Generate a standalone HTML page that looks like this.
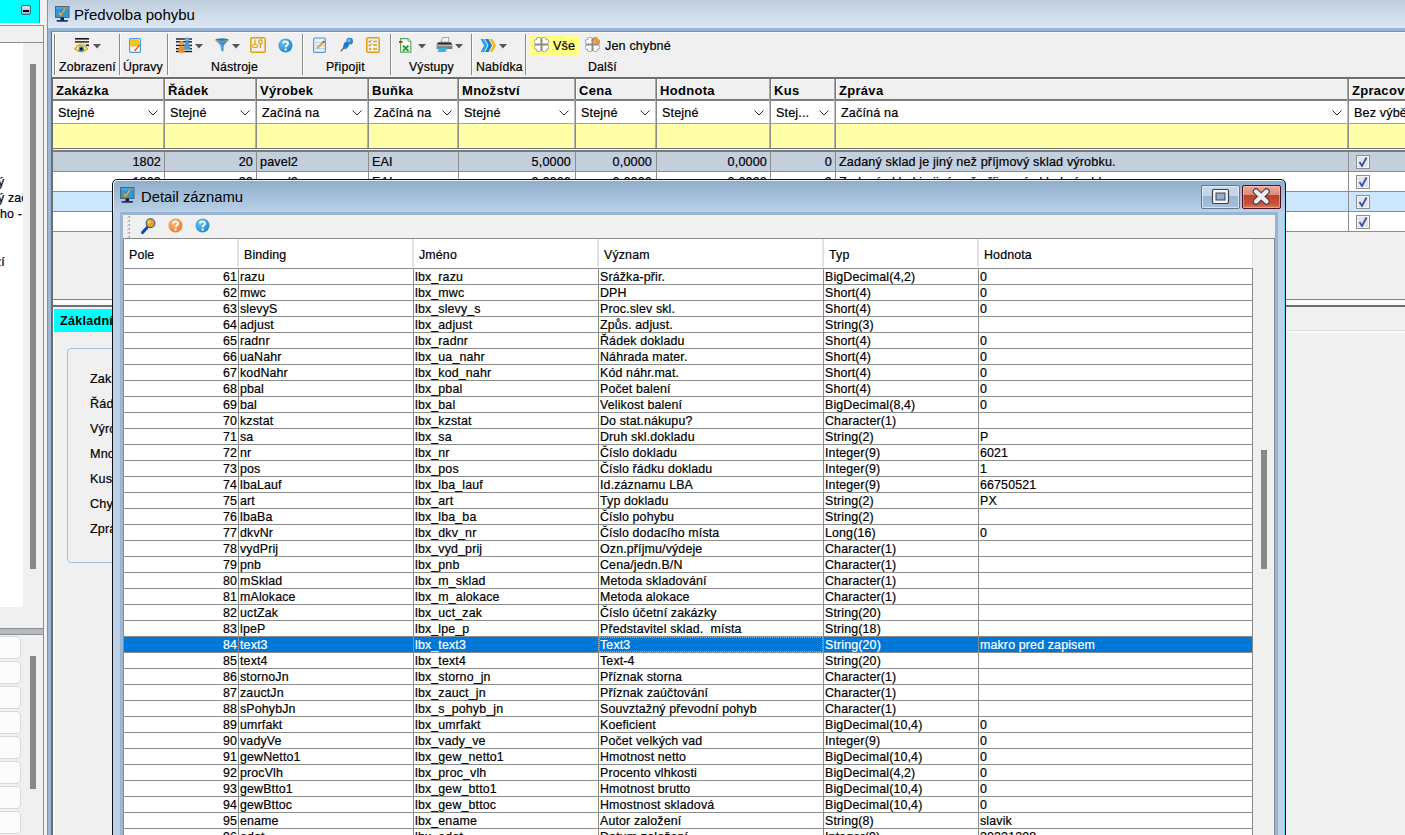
<!DOCTYPE html><html><head><meta charset="utf-8"><style>
html,body{margin:0;padding:0;}
body{width:1405px;height:835px;overflow:hidden;position:relative;background:#f0f0f0;font-family:"Liberation Sans", sans-serif;color:#000;}
div{position:absolute;box-sizing:border-box;}
.t{white-space:nowrap;font-size:12.4px;line-height:15px;-webkit-text-stroke:0.2px currentColor;letter-spacing:0.15px;}
.hb{white-space:nowrap;font-size:13px;font-weight:bold;line-height:15px;letter-spacing:0.3px;}
svg{position:absolute;}

</style></head><body>
<div style="left:0px;top:0px;width:39px;height:23px;background:#00ffff"></div>
<div style="left:39px;top:0px;width:1px;height:23px;background:#7a7a7a"></div>
<div style="left:21px;top:5px;width:10px;height:10px;background:linear-gradient(#dfe9f5,#8fb3e3);border:1px solid #2b6b74;border-radius:2px"></div>
<div style="left:23px;top:10px;width:6px;height:2px;background:#000"></div>
<div style="left:0px;top:23px;width:44px;height:2px;background:#fafafa"></div>
<div style="left:0px;top:25px;width:44px;height:1px;background:#8a9099"></div>
<div style="left:43px;top:25px;width:1px;height:810px;background:#8a9099"></div>
<div style="left:0px;top:42px;width:43px;height:1px;background:#8a9099"></div>
<div style="left:0px;top:43px;width:23px;height:564px;background:#ffffff"></div>
<div style="left:30px;top:64px;width:6px;height:505px;background:#888888"></div>
<div style="left:0;top:170px;width:23px;height:110px;overflow:hidden">
<div class="t" style="left:-2px;top:5px;">ý</div>
<div class="t" style="left:-2px;top:21px;">ý zač</div>
<div class="t" style="left:0px;top:37px;">ho -</div>
<div class="t" style="left:-5px;top:85px;">zí</div>
</div>
<div style="left:0px;top:628px;width:43px;height:1px;background:#8a9099"></div>
<div style="left:0px;top:629px;width:43px;height:5px;background:#b9b9b9"></div>
<div style="left:0px;top:634px;width:43px;height:1px;background:#8a9099"></div>
<div style="left:-6px;top:636px;width:27px;height:23px;background:#fcfcfc;border:1px solid #d9d9d9;border-radius:4px"></div>
<div style="left:-6px;top:661px;width:27px;height:23px;background:#fcfcfc;border:1px solid #d9d9d9;border-radius:4px"></div>
<div style="left:-6px;top:686px;width:27px;height:23px;background:#fcfcfc;border:1px solid #d9d9d9;border-radius:4px"></div>
<div style="left:-6px;top:711px;width:27px;height:23px;background:#fcfcfc;border:1px solid #d9d9d9;border-radius:4px"></div>
<div style="left:-6px;top:736px;width:27px;height:23px;background:#fcfcfc;border:1px solid #d9d9d9;border-radius:4px"></div>
<div style="left:-6px;top:761px;width:27px;height:23px;background:#fcfcfc;border:1px solid #d9d9d9;border-radius:4px"></div>
<div style="left:-6px;top:786px;width:27px;height:23px;background:#fcfcfc;border:1px solid #d9d9d9;border-radius:4px"></div>
<div style="left:-6px;top:811px;width:27px;height:23px;background:#fcfcfc;border:1px solid #d9d9d9;border-radius:4px"></div>
<div style="left:30px;top:656px;width:6px;height:133px;background:#888888"></div>
<div style="left:47px;top:0px;width:1px;height:835px;background:#8a9099"></div>
<div style="left:48px;top:0px;width:1357px;height:28px;background:linear-gradient(#bfcedc,#dce8f4)"></div>
<div style="left:48px;top:28px;width:1357px;height:3px;background:#9ab5d2"></div>
<div style="left:48px;top:28px;width:3px;height:807px;background:#9cb6d4"></div>
<div style="left:51px;top:77px;width:1px;height:758px;background:#6c6c6c"></div>
<div style="left:52px;top:306px;width:1px;height:529px;background:#6c6c6c"></div>
<div style="left:53px;top:307px;width:2px;height:528px;background:#f8f8f8"></div>
<svg style="left:55px;top:6px" width="15" height="16" viewBox="0 0 15 16">
<rect x="0.5" y="0.5" width="13.5" height="11" fill="#2b9ad8" stroke="#5a6270"/>
<rect x="1" y="1" width="12.5" height="2" fill="#4ab0e8" opacity="0.6"/>
<path d="M3.8 6.5 L5.6 9.2 L10 2.8" stroke="#7a4a10" stroke-width="2.4" fill="none" opacity="0.35"/>
<path d="M3.8 6.5 L5.6 9.2 L10 2.8" stroke="#f8a020" stroke-width="1.6" fill="none"/>
<rect x="5.5" y="11.5" width="3.5" height="2.5" fill="#1a1a22"/>
<rect x="1.5" y="14" width="11.5" height="1.8" rx="0.8" fill="#2a3060"/>
</svg>
<div style="left:74px;top:6px;font-size:15px;line-height:18px;white-space:nowrap;color:#000">Předvolba pohybu</div>
<div style="left:51px;top:31px;width:1354px;height:46px;background:#f0f0f0;border-left:1px solid #6c6c6c;border-top:1px solid #8a9099"></div>
<div style="left:52px;top:32px;width:1353px;height:1px;background:#fafafa"></div>
<div style="left:54px;top:34px;width:1px;height:41px;background:#8a8a8a"></div>
<div style="left:55px;top:34px;width:1px;height:41px;background:#fbfbfb"></div>
<div style="left:119px;top:34px;width:1px;height:41px;background:#8a8a8a"></div>
<div style="left:120px;top:34px;width:1px;height:41px;background:#fbfbfb"></div>
<div style="left:167px;top:34px;width:1px;height:41px;background:#8a8a8a"></div>
<div style="left:168px;top:34px;width:1px;height:41px;background:#fbfbfb"></div>
<div style="left:302px;top:34px;width:1px;height:41px;background:#8a8a8a"></div>
<div style="left:303px;top:34px;width:1px;height:41px;background:#fbfbfb"></div>
<div style="left:390px;top:34px;width:1px;height:41px;background:#8a8a8a"></div>
<div style="left:391px;top:34px;width:1px;height:41px;background:#fbfbfb"></div>
<div style="left:471px;top:34px;width:1px;height:41px;background:#8a8a8a"></div>
<div style="left:472px;top:34px;width:1px;height:41px;background:#fbfbfb"></div>
<div style="left:525px;top:34px;width:1px;height:41px;background:#8a8a8a"></div>
<div style="left:526px;top:34px;width:1px;height:41px;background:#fbfbfb"></div>
<div class="t" style="left:59px;top:59px;font-size:12.3px;line-height:16px">Zobrazení</div>
<div class="t" style="left:123px;top:59px;font-size:12.3px;line-height:16px">Úpravy</div>
<div class="t" style="left:211px;top:59px;font-size:12.3px;line-height:16px">Nástroje</div>
<div class="t" style="left:326px;top:59px;font-size:12.3px;line-height:16px">Připojit</div>
<div class="t" style="left:409px;top:59px;font-size:12.3px;line-height:16px">Výstupy</div>
<div class="t" style="left:476px;top:59px;font-size:12.3px;line-height:16px">Nabídka</div>
<div class="t" style="left:588px;top:59px;font-size:12.3px;line-height:16px">Další</div>
<div style="left:529px;top:35px;width:51px;height:21px;background:#ffff80"></div>
<div class="t" style="left:553px;top:38px;font-size:12.6px;line-height:16px">Vše</div>
<div class="t" style="left:605px;top:38px;font-size:12.6px;line-height:16px">Jen chybné</div>
<svg style="left:74px;top:37px" width="16" height="17" viewBox="0 0 16 17">
<rect x="1" y="1" width="14" height="1.6" fill="#1a1a1a"/><rect x="1" y="4.2" width="14" height="1.4" fill="#1a1a1a"/>
<path d="M0.8 11.8 Q7 4.5 13.6 11.8 Q7 17.5 0.8 11.8 Z" fill="#fbf3c8" stroke="#d8a800" stroke-width="1.3"/>
<path d="M2 9 Q7 5 12 8.5" stroke="#e8c030" stroke-width="1" fill="none"/>
<circle cx="7.3" cy="12" r="2.7" fill="#2b86c2"/><circle cx="7.3" cy="12" r="1.3" fill="#0a0a0a"/>
<rect x="12" y="7.5" width="3" height="1.6" fill="#1a1a1a"/>
</svg>
<svg style="left:93px;top:44px" width="8" height="5"><path d="M0 0 H8 L4 4.5 Z" fill="#555"/></svg>
<svg style="left:129px;top:38px" width="12" height="15" viewBox="0 0 12 15">
<rect x="0.6" y="0.6" width="10.8" height="13.8" rx="1" fill="#fff" stroke="#4a9ee0" stroke-width="1.2"/>
<path d="M1.2 1.2 H8.5 L10.8 3.5 V8.5 H1.2 Z" fill="#f8c21c"/>
<path d="M5.5 13 L10.8 7" stroke="#e8602a" stroke-width="1.6"/>
</svg>
<svg style="left:176px;top:37px" width="16" height="16" viewBox="0 0 16 16">
<g fill="#1a1a1a"><rect x="0" y="1.3" width="16" height="1.4"/><rect x="0" y="4.1" width="16" height="1.4"/><rect x="0" y="7.7" width="16" height="1.4"/><rect x="0" y="11" width="16" height="1.4"/><rect x="0" y="13.8" width="16" height="1.4"/></g>
<circle cx="11" cy="2.6" r="2.3" fill="#5aaee6"/><path d="M8 12 Q8 5 11 5 Q14 5 14.5 12 Z" fill="#4a9ad8"/>
<circle cx="5.5" cy="6.3" r="2.3" fill="#f49a3a"/><path d="M2.2 15.5 Q2.2 8.5 5.5 8.5 Q8.8 8.5 8.8 15.5 Z" fill="#f08a2a"/>
</svg>
<svg style="left:195px;top:44px" width="8" height="5"><path d="M0 0 H8 L4 4.5 Z" fill="#555"/></svg>
<svg style="left:215px;top:38px" width="14" height="14" viewBox="0 0 14 14">
<path d="M0.2 2 Q0.5 0.2 7 0.2 Q13.5 0.2 13.8 2 L8.6 7.5 L8.4 13.6 L6.2 12.8 L5.4 7.5 Z" fill="#3b8fd0"/>
<ellipse cx="7" cy="2" rx="6.2" ry="1.3" fill="#2a78c0"/>
<path d="M0.8 2.6 Q7 4.2 13.2 2.6" stroke="#d8a040" stroke-width="0.9" fill="none"/>
<path d="M2.5 3.5 L6.5 7.5 V12" stroke="#6cc0f0" stroke-width="1" fill="none"/>
</svg>
<svg style="left:232px;top:44px" width="8" height="5"><path d="M0 0 H8 L4 4.5 Z" fill="#555"/></svg>
<svg style="left:250px;top:37px" width="16" height="16" viewBox="0 0 16 16">
<rect x="0.8" y="0.8" width="14.4" height="14.4" rx="1.5" fill="none" stroke="#e0a010" stroke-width="1.5"/>
<path d="M5 2.5 V11 M10.5 2.5 V11" stroke="#e0a010" stroke-width="1.2"/>
<ellipse cx="5" cy="9" rx="2.6" ry="1.5" fill="#fff" stroke="#e0a010" stroke-width="1.1"/>
<ellipse cx="10.5" cy="5" rx="1.7" ry="2.1" fill="#fff" stroke="#e0a010" stroke-width="1.1"/>
</svg>
<svg style="left:278px;top:38px" width="15" height="15" viewBox="0 0 15 15">
<defs><radialGradient id="g27838" cx="0.35" cy="0.3" r="0.85"><stop offset="0" stop-color="#5cc0f0"/><stop offset="1" stop-color="#1580c8"/></radialGradient></defs>
<circle cx="7.5" cy="7.5" r="7" fill="url(#g27838)"/>
<path d="M5.1 5.4 C5.1 2.9 10 2.9 10 5.4 C10 7.2 7.6 7.2 7.6 9.3" stroke="#fff" stroke-width="1.9" fill="none"/>
<rect x="6.6" y="10.6" width="2" height="2" fill="#fff"/>
</svg>
<svg style="left:313px;top:37px" width="13" height="16" viewBox="0 0 13 16">
<rect x="0.6" y="1" width="11.8" height="14.4" rx="1.2" fill="#e4f2fc" stroke="#5a9ad8" stroke-width="1.2"/>
<path d="M2 5.5 H11 M2 8.5 H11 M2 11.5 H11" stroke="#a8cdea" stroke-width="0.8"/>
<path d="M2 1 H11" stroke="#c8a040" stroke-width="1.2" stroke-dasharray="1 1"/>
<path d="M4 11.5 L10.5 5" stroke="#f0a020" stroke-width="2"/>
<path d="M10 5.5 L11.2 4.3" stroke="#c03a2a" stroke-width="2"/>
</svg>
<svg style="left:340px;top:37px" width="14" height="15" viewBox="0 0 14 15">
<path d="M0.8 14.2 L5 9.5" stroke="#666" stroke-width="1.3"/>
<path d="M3.5 8.2 L6.5 11.2 L8.5 9.5 L9.5 4.5 L4.5 5.5 Z" fill="#1f6fb8"/>
<circle cx="9.6" cy="4.2" r="3.4" fill="#2d86cc"/>
<circle cx="9" cy="3.5" r="1.5" fill="#7cc4f0"/>
<circle cx="5.2" cy="9.8" r="2.2" fill="#2a7cc4"/>
</svg>
<svg style="left:366px;top:37px" width="14" height="16" viewBox="0 0 14 16">
<rect x="0.8" y="0.8" width="12.4" height="14.4" rx="1.2" fill="none" stroke="#e0a010" stroke-width="1.5"/>
<path d="M2.5 4 L3.7 5.2 L5.5 2.8 M2.5 7.8 L3.7 9 L5.5 6.6" stroke="#e0a010" stroke-width="1.1" fill="none"/>
<circle cx="4" cy="12" r="1.2" fill="#e0a010"/>
<path d="M7 4.3 H11 M7 8 H11 M7 12 H11" stroke="#e0a010" stroke-width="1.3"/>
</svg>
<svg style="left:399px;top:38px" width="13" height="15" viewBox="0 0 13 15">
<path d="M1.6 0.6 H9 L11.8 3.4 V14.2 H1.6 Z" fill="#fff" stroke="#5aa85a" stroke-width="1.2"/>
<path d="M9 0.6 V3.4 H11.8" fill="#e8f4e8" stroke="#5aa85a" stroke-width="0.8"/>
<rect x="0" y="3" width="3.5" height="1.8" fill="#d02020"/>
<path d="M4 7.5 L9.5 13 M9.5 7.5 L4 13" stroke="#2a9a3a" stroke-width="1.8"/>
</svg>
<svg style="left:418px;top:44px" width="8" height="5"><path d="M0 0 H8 L4 4.5 Z" fill="#555"/></svg>
<svg style="left:436px;top:37px" width="17" height="16" viewBox="0 0 17 16">
<path d="M5 5 L6.5 0.6 H13 L12.5 5 Z" fill="#fafafa" stroke="#8a8a8a" stroke-width="0.8"/>
<path d="M0.6 7 Q1 5 3 5 H14 Q16.4 5 16.4 7.5 V12 H0.6 Z" fill="#7a7c80"/>
<rect x="2" y="5.8" width="13" height="1.4" fill="#2a2a2a"/>
<rect x="1" y="8" width="15" height="1.2" fill="#b8babd"/>
<path d="M3 10.5 L1.5 15 H9.5 L11 10.5 Z" fill="#38b0e8"/>
</svg>
<svg style="left:455px;top:44px" width="8" height="5"><path d="M0 0 H8 L4 4.5 Z" fill="#555"/></svg>
<svg style="left:480px;top:39px" width="17" height="13" viewBox="0 0 17 13">
<path d="M0.5 0 H4 L7.5 6.5 L4 13 H0.5 L4 6.5 Z" fill="#28a8e8"/>
<path d="M5 0 H8.5 L12 6.5 L8.5 13 H5 L8.5 6.5 Z" fill="#1e7cc8"/>
<path d="M9.5 0 H12.5 L16 6.5 L12.5 13 H9.5 L13 6.5 Z" fill="#f8b818"/>
</svg>
<svg style="left:499px;top:44px" width="8" height="5"><path d="M0 0 H8 L4 4.5 Z" fill="#555"/></svg>
<svg style="left:534px;top:37px" width="15" height="15" viewBox="0 0 15 15"><g fill="#9a9a9a"><circle cx="2.3" cy="4.7" r="2.5"/><circle cx="4.7" cy="2.3" r="2.5"/><path d="M7.0 7.0 L1.0 6.0 L6.0 1.0 Z" stroke="#909090" stroke-width="0"/><circle cx="12.7" cy="4.7" r="2.5"/><circle cx="10.3" cy="2.3" r="2.5"/><path d="M8.0 7.0 L14.0 6.0 L9.0 1.0 Z" stroke="#909090" stroke-width="0"/><circle cx="2.3" cy="10.3" r="2.5"/><circle cx="4.7" cy="12.7" r="2.5"/><path d="M7.0 8.0 L1.0 9.0 L6.0 14.0 Z" stroke="#909090" stroke-width="0"/><circle cx="12.7" cy="10.3" r="2.5"/><circle cx="10.3" cy="12.7" r="2.5"/><path d="M8.0 8.0 L14.0 9.0 L9.0 14.0 Z" stroke="#909090" stroke-width="0"/></g><g fill="#fff"><circle cx="2.3" cy="4.7" r="1.7"/><circle cx="4.7" cy="2.3" r="1.7"/><path d="M6.2 6.2 L1.7000000000000002 6.2 L1.7000000000000002 4.5 L4.5 1.7000000000000002 L6.2 1.7000000000000002 Z"/></g><g fill="#fff"><circle cx="12.7" cy="4.7" r="1.7"/><circle cx="10.3" cy="2.3" r="1.7"/><path d="M8.8 6.2 L13.3 6.2 L13.3 4.5 L10.5 1.7000000000000002 L8.8 1.7000000000000002 Z"/></g><g fill="#fff"><circle cx="2.3" cy="10.3" r="1.7"/><circle cx="4.7" cy="12.7" r="1.7"/><path d="M6.2 8.8 L1.7000000000000002 8.8 L1.7000000000000002 10.5 L4.5 13.3 L6.2 13.3 Z"/></g><g fill="#fff"><circle cx="12.7" cy="10.3" r="1.7"/><circle cx="10.3" cy="12.7" r="1.7"/><path d="M8.8 8.8 L13.3 8.8 L13.3 10.5 L10.5 13.3 L8.8 13.3 Z"/></g><path d="M7.5 1 V14 M1 7.5 H14" stroke="#808080" stroke-width="0.9"/></svg>
<svg style="left:585px;top:37px" width="15" height="15" viewBox="0 0 15 15"><g fill="#9a9a9a"><circle cx="2.3" cy="4.7" r="2.5"/><circle cx="4.7" cy="2.3" r="2.5"/><path d="M7.0 7.0 L1.0 6.0 L6.0 1.0 Z" stroke="#909090" stroke-width="0"/><circle cx="12.7" cy="4.7" r="2.5"/><circle cx="10.3" cy="2.3" r="2.5"/><path d="M8.0 7.0 L14.0 6.0 L9.0 1.0 Z" stroke="#909090" stroke-width="0"/><circle cx="2.3" cy="10.3" r="2.5"/><circle cx="4.7" cy="12.7" r="2.5"/><path d="M7.0 8.0 L1.0 9.0 L6.0 14.0 Z" stroke="#909090" stroke-width="0"/><circle cx="12.7" cy="10.3" r="2.5"/><circle cx="10.3" cy="12.7" r="2.5"/><path d="M8.0 8.0 L14.0 9.0 L9.0 14.0 Z" stroke="#909090" stroke-width="0"/></g><g fill="#fff"><circle cx="2.3" cy="4.7" r="1.7"/><circle cx="4.7" cy="2.3" r="1.7"/><path d="M6.2 6.2 L1.7000000000000002 6.2 L1.7000000000000002 4.5 L4.5 1.7000000000000002 L6.2 1.7000000000000002 Z"/></g><g fill="#f8982a"><circle cx="12.7" cy="4.7" r="1.7"/><circle cx="10.3" cy="2.3" r="1.7"/><path d="M8.8 6.2 L13.3 6.2 L13.3 4.5 L10.5 1.7000000000000002 L8.8 1.7000000000000002 Z"/></g><g fill="#fff"><circle cx="2.3" cy="10.3" r="1.7"/><circle cx="4.7" cy="12.7" r="1.7"/><path d="M6.2 8.8 L1.7000000000000002 8.8 L1.7000000000000002 10.5 L4.5 13.3 L6.2 13.3 Z"/></g><g fill="#fff"><circle cx="12.7" cy="10.3" r="1.7"/><circle cx="10.3" cy="12.7" r="1.7"/><path d="M8.8 8.8 L13.3 8.8 L13.3 10.5 L10.5 13.3 L8.8 13.3 Z"/></g><path d="M7.5 1 V14 M1 7.5 H14" stroke="#808080" stroke-width="0.9"/></svg>
<div style="left:51px;top:77px;width:1354px;height:2px;background:#6e6e6e"></div>
<div style="left:51px;top:79px;width:2px;height:228px;background:#6e6e6e"></div>
<div style="left:53px;top:79px;width:1352px;height:21px;background:#f0f0f0;border-top:1px solid #fcfcfc"></div>
<div style="left:53px;top:99px;width:1352px;height:2px;background:#7d7d7d"></div>
<div style="left:53px;top:101px;width:1352px;height:23px;background:#ffffff"></div>
<div style="left:53px;top:123px;width:1352px;height:1px;background:#a0a0a0"></div>
<div style="left:53px;top:124px;width:1352px;height:24px;background:#ffffaa"></div>
<div style="left:53px;top:148px;width:1352px;height:1px;background:#6e6e6e"></div>
<div style="left:53px;top:149px;width:1352px;height:1px;background:#fafafa"></div>
<div style="left:53px;top:150px;width:1352px;height:2px;background:#7a7a7a"></div>
<div style="left:53px;top:152px;width:1352px;height:19px;background:#c3cfdc"></div>
<div style="left:53px;top:171px;width:1352px;height:20px;background:#ffffff"></div>
<div style="left:53px;top:191px;width:1352px;height:20px;background:#cce6fd"></div>
<div style="left:53px;top:211px;width:1352px;height:20px;background:#ffffff"></div>
<div style="left:53px;top:231px;width:1352px;height:68px;background:#f0f0f0"></div>
<div style="left:53px;top:171px;width:1352px;height:1px;background:#8c8c8c"></div>
<div style="left:53px;top:191px;width:1352px;height:1px;background:#8c8c8c"></div>
<div style="left:53px;top:211px;width:1352px;height:1px;background:#8c8c8c"></div>
<div style="left:53px;top:231px;width:1352px;height:1px;background:#8c8c8c"></div>
<div style="left:53px;top:299px;width:1352px;height:1px;background:#7a8090"></div>
<div style="left:53px;top:300px;width:1352px;height:5px;background:#fafafa"></div>
<div style="left:51px;top:305px;width:1354px;height:2px;background:#6a6e78"></div>
<div style="left:163px;top:79px;width:1px;height:22px;background:#a8a8a8"></div>
<div style="left:164px;top:79px;width:1px;height:22px;background:#7a7a7a"></div>
<div style="left:165px;top:80px;width:1px;height:19px;background:#fcfcfc"></div>
<div style="left:163px;top:101px;width:1px;height:23px;background:#c0c0c0"></div>
<div style="left:164px;top:101px;width:1px;height:23px;background:#8a8a8a"></div>
<div style="left:163px;top:124px;width:1px;height:24px;background:#b0b0b0"></div>
<div style="left:164px;top:124px;width:1px;height:24px;background:#8c8c8c"></div>
<div style="left:164px;top:152px;width:1px;height:79px;background:#8c8c8c"></div>
<div style="left:255px;top:79px;width:1px;height:22px;background:#a8a8a8"></div>
<div style="left:256px;top:79px;width:1px;height:22px;background:#7a7a7a"></div>
<div style="left:257px;top:80px;width:1px;height:19px;background:#fcfcfc"></div>
<div style="left:255px;top:101px;width:1px;height:23px;background:#c0c0c0"></div>
<div style="left:256px;top:101px;width:1px;height:23px;background:#8a8a8a"></div>
<div style="left:255px;top:124px;width:1px;height:24px;background:#b0b0b0"></div>
<div style="left:256px;top:124px;width:1px;height:24px;background:#8c8c8c"></div>
<div style="left:256px;top:152px;width:1px;height:79px;background:#8c8c8c"></div>
<div style="left:367px;top:79px;width:1px;height:22px;background:#a8a8a8"></div>
<div style="left:368px;top:79px;width:1px;height:22px;background:#7a7a7a"></div>
<div style="left:369px;top:80px;width:1px;height:19px;background:#fcfcfc"></div>
<div style="left:367px;top:101px;width:1px;height:23px;background:#c0c0c0"></div>
<div style="left:368px;top:101px;width:1px;height:23px;background:#8a8a8a"></div>
<div style="left:367px;top:124px;width:1px;height:24px;background:#b0b0b0"></div>
<div style="left:368px;top:124px;width:1px;height:24px;background:#8c8c8c"></div>
<div style="left:368px;top:152px;width:1px;height:79px;background:#8c8c8c"></div>
<div style="left:457px;top:79px;width:1px;height:22px;background:#a8a8a8"></div>
<div style="left:458px;top:79px;width:1px;height:22px;background:#7a7a7a"></div>
<div style="left:459px;top:80px;width:1px;height:19px;background:#fcfcfc"></div>
<div style="left:457px;top:101px;width:1px;height:23px;background:#c0c0c0"></div>
<div style="left:458px;top:101px;width:1px;height:23px;background:#8a8a8a"></div>
<div style="left:457px;top:124px;width:1px;height:24px;background:#b0b0b0"></div>
<div style="left:458px;top:124px;width:1px;height:24px;background:#8c8c8c"></div>
<div style="left:458px;top:152px;width:1px;height:79px;background:#8c8c8c"></div>
<div style="left:574px;top:79px;width:1px;height:22px;background:#a8a8a8"></div>
<div style="left:575px;top:79px;width:1px;height:22px;background:#7a7a7a"></div>
<div style="left:576px;top:80px;width:1px;height:19px;background:#fcfcfc"></div>
<div style="left:574px;top:101px;width:1px;height:23px;background:#c0c0c0"></div>
<div style="left:575px;top:101px;width:1px;height:23px;background:#8a8a8a"></div>
<div style="left:574px;top:124px;width:1px;height:24px;background:#b0b0b0"></div>
<div style="left:575px;top:124px;width:1px;height:24px;background:#8c8c8c"></div>
<div style="left:575px;top:152px;width:1px;height:79px;background:#8c8c8c"></div>
<div style="left:655px;top:79px;width:1px;height:22px;background:#a8a8a8"></div>
<div style="left:656px;top:79px;width:1px;height:22px;background:#7a7a7a"></div>
<div style="left:657px;top:80px;width:1px;height:19px;background:#fcfcfc"></div>
<div style="left:655px;top:101px;width:1px;height:23px;background:#c0c0c0"></div>
<div style="left:656px;top:101px;width:1px;height:23px;background:#8a8a8a"></div>
<div style="left:655px;top:124px;width:1px;height:24px;background:#b0b0b0"></div>
<div style="left:656px;top:124px;width:1px;height:24px;background:#8c8c8c"></div>
<div style="left:656px;top:152px;width:1px;height:79px;background:#8c8c8c"></div>
<div style="left:769px;top:79px;width:1px;height:22px;background:#a8a8a8"></div>
<div style="left:770px;top:79px;width:1px;height:22px;background:#7a7a7a"></div>
<div style="left:771px;top:80px;width:1px;height:19px;background:#fcfcfc"></div>
<div style="left:769px;top:101px;width:1px;height:23px;background:#c0c0c0"></div>
<div style="left:770px;top:101px;width:1px;height:23px;background:#8a8a8a"></div>
<div style="left:769px;top:124px;width:1px;height:24px;background:#b0b0b0"></div>
<div style="left:770px;top:124px;width:1px;height:24px;background:#8c8c8c"></div>
<div style="left:770px;top:152px;width:1px;height:79px;background:#8c8c8c"></div>
<div style="left:834px;top:79px;width:1px;height:22px;background:#a8a8a8"></div>
<div style="left:835px;top:79px;width:1px;height:22px;background:#7a7a7a"></div>
<div style="left:836px;top:80px;width:1px;height:19px;background:#fcfcfc"></div>
<div style="left:834px;top:101px;width:1px;height:23px;background:#c0c0c0"></div>
<div style="left:835px;top:101px;width:1px;height:23px;background:#8a8a8a"></div>
<div style="left:834px;top:124px;width:1px;height:24px;background:#b0b0b0"></div>
<div style="left:835px;top:124px;width:1px;height:24px;background:#8c8c8c"></div>
<div style="left:835px;top:152px;width:1px;height:79px;background:#8c8c8c"></div>
<div style="left:1347px;top:79px;width:1px;height:22px;background:#a8a8a8"></div>
<div style="left:1348px;top:79px;width:1px;height:22px;background:#7a7a7a"></div>
<div style="left:1349px;top:80px;width:1px;height:19px;background:#fcfcfc"></div>
<div style="left:1347px;top:101px;width:1px;height:23px;background:#c0c0c0"></div>
<div style="left:1348px;top:101px;width:1px;height:23px;background:#8a8a8a"></div>
<div style="left:1347px;top:124px;width:1px;height:24px;background:#b0b0b0"></div>
<div style="left:1348px;top:124px;width:1px;height:24px;background:#8c8c8c"></div>
<div style="left:1348px;top:152px;width:1px;height:79px;background:#8c8c8c"></div>
<div class="hb" style="left:56px;top:83px">Zakázka</div>
<div class="t" style="left:58px;top:105px;font-size:12.6px;line-height:16px">Stejné</div>
<svg style="left:148px;top:110px" width="10" height="6"><path d="M0.5 0.5 L5 5 L9.5 0.5" stroke="#333" stroke-width="1" fill="none"/></svg>
<div class="hb" style="left:168px;top:83px">Řádek</div>
<div class="t" style="left:170px;top:105px;font-size:12.6px;line-height:16px">Stejné</div>
<svg style="left:240px;top:110px" width="10" height="6"><path d="M0.5 0.5 L5 5 L9.5 0.5" stroke="#333" stroke-width="1" fill="none"/></svg>
<div class="hb" style="left:260px;top:83px">Výrobek</div>
<div class="t" style="left:262px;top:105px;font-size:12.6px;line-height:16px">Začíná na</div>
<svg style="left:352px;top:110px" width="10" height="6"><path d="M0.5 0.5 L5 5 L9.5 0.5" stroke="#333" stroke-width="1" fill="none"/></svg>
<div class="hb" style="left:372px;top:83px">Buňka</div>
<div class="t" style="left:374px;top:105px;font-size:12.6px;line-height:16px">Začíná na</div>
<svg style="left:442px;top:110px" width="10" height="6"><path d="M0.5 0.5 L5 5 L9.5 0.5" stroke="#333" stroke-width="1" fill="none"/></svg>
<div class="hb" style="left:462px;top:83px">Množství</div>
<div class="t" style="left:464px;top:105px;font-size:12.6px;line-height:16px">Stejné</div>
<svg style="left:559px;top:110px" width="10" height="6"><path d="M0.5 0.5 L5 5 L9.5 0.5" stroke="#333" stroke-width="1" fill="none"/></svg>
<div class="hb" style="left:579px;top:83px">Cena</div>
<div class="t" style="left:581px;top:105px;font-size:12.6px;line-height:16px">Stejné</div>
<svg style="left:640px;top:110px" width="10" height="6"><path d="M0.5 0.5 L5 5 L9.5 0.5" stroke="#333" stroke-width="1" fill="none"/></svg>
<div class="hb" style="left:660px;top:83px">Hodnota</div>
<div class="t" style="left:662px;top:105px;font-size:12.6px;line-height:16px">Stejné</div>
<svg style="left:754px;top:110px" width="10" height="6"><path d="M0.5 0.5 L5 5 L9.5 0.5" stroke="#333" stroke-width="1" fill="none"/></svg>
<div class="hb" style="left:774px;top:83px">Kus</div>
<div class="t" style="left:776px;top:105px;font-size:12.6px;line-height:16px">Stej...</div>
<svg style="left:819px;top:110px" width="10" height="6"><path d="M0.5 0.5 L5 5 L9.5 0.5" stroke="#333" stroke-width="1" fill="none"/></svg>
<div class="hb" style="left:839px;top:83px">Zpráva</div>
<div class="t" style="left:841px;top:105px;font-size:12.6px;line-height:16px">Začíná na</div>
<svg style="left:1332px;top:110px" width="10" height="6"><path d="M0.5 0.5 L5 5 L9.5 0.5" stroke="#333" stroke-width="1" fill="none"/></svg>
<div class="hb" style="left:1352px;top:83px">Zpracování</div>
<div class="t" style="left:1354px;top:105px;font-size:12.6px;line-height:16px">Bez výběru</div>
<div class="t" style="left:-139px;width:300px;text-align:right;top:154px;font-size:12.6px;line-height:16px">1802</div>
<div class="t" style="left:-47px;width:300px;text-align:right;top:154px;font-size:12.6px;line-height:16px">20</div>
<div class="t" style="left:260px;top:154px;font-size:12.6px;line-height:16px">pavel2</div>
<div class="t" style="left:372px;top:154px;font-size:12.6px;line-height:16px">EAI</div>
<div class="t" style="left:271px;width:300px;text-align:right;top:154px;font-size:12.6px;line-height:16px">5,0000</div>
<div class="t" style="left:352px;width:300px;text-align:right;top:154px;font-size:12.6px;line-height:16px">0,0000</div>
<div class="t" style="left:467px;width:300px;text-align:right;top:154px;font-size:12.6px;line-height:16px">0,0000</div>
<div class="t" style="left:532px;width:300px;text-align:right;top:154px;font-size:12.6px;line-height:16px">0</div>
<div class="t" style="left:839px;top:154px;font-size:12.6px;line-height:16px">Zadaný sklad je jiný než příjmový sklad výrobku.</div>
<div class="t" style="left:-139px;width:300px;text-align:right;top:174px;font-size:12.6px;line-height:16px">1803</div>
<div class="t" style="left:-47px;width:300px;text-align:right;top:174px;font-size:12.6px;line-height:16px">20</div>
<div class="t" style="left:260px;top:174px;font-size:12.6px;line-height:16px">pavel2</div>
<div class="t" style="left:372px;top:174px;font-size:12.6px;line-height:16px">EAI</div>
<div class="t" style="left:271px;width:300px;text-align:right;top:174px;font-size:12.6px;line-height:16px">3,0000</div>
<div class="t" style="left:352px;width:300px;text-align:right;top:174px;font-size:12.6px;line-height:16px">0,0000</div>
<div class="t" style="left:467px;width:300px;text-align:right;top:174px;font-size:12.6px;line-height:16px">0,0000</div>
<div class="t" style="left:532px;width:300px;text-align:right;top:174px;font-size:12.6px;line-height:16px">0</div>
<div class="t" style="left:839px;top:174px;font-size:12.6px;line-height:16px">Zadaný sklad je jiný než příjmový sklad výrobku.</div>
<svg style="left:1356px;top:155px" width="14" height="14" viewBox="0 0 14 14">
<rect x="0.5" y="0.5" width="13" height="13" fill="#f4f4f4" stroke="#8e8f8f"/>
<rect x="2" y="2" width="10" height="10" fill="#e2e6ea"/>
<path d="M3.5 7 L6 11 L10.5 2.5" stroke="#3b4fa8" stroke-width="1.8" fill="none"/>
</svg>
<svg style="left:1356px;top:175px" width="14" height="14" viewBox="0 0 14 14">
<rect x="0.5" y="0.5" width="13" height="13" fill="#f4f4f4" stroke="#8e8f8f"/>
<rect x="2" y="2" width="10" height="10" fill="#e2e6ea"/>
<path d="M3.5 7 L6 11 L10.5 2.5" stroke="#3b4fa8" stroke-width="1.8" fill="none"/>
</svg>
<svg style="left:1356px;top:195px" width="14" height="14" viewBox="0 0 14 14">
<rect x="0.5" y="0.5" width="13" height="13" fill="#f4f4f4" stroke="#8e8f8f"/>
<rect x="2" y="2" width="10" height="10" fill="#e2e6ea"/>
<path d="M3.5 7 L6 11 L10.5 2.5" stroke="#3b4fa8" stroke-width="1.8" fill="none"/>
</svg>
<svg style="left:1356px;top:215px" width="14" height="14" viewBox="0 0 14 14">
<rect x="0.5" y="0.5" width="13" height="13" fill="#f4f4f4" stroke="#8e8f8f"/>
<rect x="2" y="2" width="10" height="10" fill="#e2e6ea"/>
<path d="M3.5 7 L6 11 L10.5 2.5" stroke="#3b4fa8" stroke-width="1.8" fill="none"/>
</svg>
<div style="left:54px;top:309px;width:60px;height:23px;background:#00ffff"></div>
<div class="hb" style="left:60px;top:314px;font-size:12.5px">Základní</div>
<div style="left:114px;top:330px;width:1291px;height:1px;background:#e0e0e0"></div>
<div style="left:114px;top:331px;width:1291px;height:2px;background:#f8f8f8"></div>
<div style="left:67px;top:348px;width:80px;height:215px;border:1px solid #a9c0d8;border-radius:4px"></div>
<div class="t" style="left:90px;top:371px;font-size:12.6px;line-height:16px">Zakázka</div>
<div class="t" style="left:90px;top:396px;font-size:12.6px;line-height:16px">Řádek</div>
<div class="t" style="left:90px;top:421px;font-size:12.6px;line-height:16px">Výrobek</div>
<div class="t" style="left:90px;top:446px;font-size:12.6px;line-height:16px">Množství</div>
<div class="t" style="left:90px;top:471px;font-size:12.6px;line-height:16px">Kus</div>
<div class="t" style="left:90px;top:496px;font-size:12.6px;line-height:16px">Chyba</div>
<div class="t" style="left:90px;top:521px;font-size:12.6px;line-height:16px">Zpráva</div>
<div style="left:112px;top:179px;width:1174px;height:666px;border:1px solid #111;border-radius:5px 5px 0 0;background:linear-gradient(#8eadc9 0px,#bad2e9 33px,#b9d1ea 33px);box-shadow:inset 1px 1px 0 #e8f0f8"></div>
<div style="left:113px;top:212px;width:1172px;height:623px;background:#bcd3ea"></div>
<div style="left:120px;top:212px;width:1158px;height:3px;background:#98b4d1"></div>
<div style="left:120px;top:212px;width:3px;height:623px;background:#9bb5d3"></div>
<div style="left:1275px;top:212px;width:3px;height:623px;background:#98b4d1"></div>
<svg style="left:120px;top:187px" width="15" height="16" viewBox="0 0 15 16">
<rect x="0.5" y="0.5" width="13.5" height="11" fill="#2b9ad8" stroke="#5a6270"/>
<rect x="1" y="1" width="12.5" height="2" fill="#4ab0e8" opacity="0.6"/>
<path d="M3.8 6.5 L5.6 9.2 L10 2.8" stroke="#7a4a10" stroke-width="2.4" fill="none" opacity="0.35"/>
<path d="M3.8 6.5 L5.6 9.2 L10 2.8" stroke="#f8a020" stroke-width="1.6" fill="none"/>
<rect x="5.5" y="11.5" width="3.5" height="2.5" fill="#1a1a22"/>
<rect x="1.5" y="14" width="11.5" height="1.8" rx="0.8" fill="#2a3060"/>
</svg>
<div style="left:141px;top:188px;font-size:14.8px;line-height:18px;white-space:nowrap">Detail záznamu</div>
<div style="left:1201px;top:185px;width:39px;height:24px;border:1px solid #5f7590;border-radius:2px;background:linear-gradient(#c6d9ed 0,#c0d4ea 45%,#9ab4d0 45%,#a8c0da 100%);box-shadow:inset 0 0 0 1px rgba(255,255,255,0.55)"></div>
<svg style="left:1211px;top:188px" width="19" height="17" viewBox="0 0 19 17">
<rect x="1.5" y="1.5" width="16" height="14" rx="1.2" fill="#f4f4f4" stroke="#3c4255" stroke-width="1.2"/>
<rect x="5" y="5" width="9" height="7" fill="#93afcc" stroke="#3c4255" stroke-width="1"/>
</svg>
<div style="left:1242px;top:185px;width:39px;height:24px;border:1px solid #4a1020;border-radius:2px;background:linear-gradient(#eba898 0,#dc8a78 42%,#bf4028 42%,#c85238 80%,#d87a60 100%);box-shadow:inset 0 0 0 1px rgba(255,210,200,0.5)"></div>
<svg style="left:1251px;top:187px" width="21" height="19" viewBox="0 0 21 19">
<path d="M5 4.5 L15.5 14.5 M15.5 4.5 L5 14.5" stroke="#3a3a48" stroke-width="6.4" stroke-linecap="round"/>
<path d="M5 4.5 L15.5 14.5 M15.5 4.5 L5 14.5" stroke="#ececec" stroke-width="4.4" stroke-linecap="round"/>
</svg>
<div style="left:123px;top:215px;width:1152px;height:24px;background:#f0f0f0"></div>
<div style="left:123px;top:238px;width:1152px;height:1px;background:#8c8c8c"></div>
<div style="left:128px;top:216px;width:2px;height:1px;background:#b0b0b0"></div>
<div style="left:127px;top:217px;width:1px;height:1px;background:#c8c8c8"></div>
<div style="left:129px;top:217px;width:1px;height:1px;background:#909090"></div>
<div style="left:128px;top:220px;width:2px;height:1px;background:#b0b0b0"></div>
<div style="left:127px;top:221px;width:1px;height:1px;background:#c8c8c8"></div>
<div style="left:129px;top:221px;width:1px;height:1px;background:#909090"></div>
<div style="left:128px;top:224px;width:2px;height:1px;background:#b0b0b0"></div>
<div style="left:127px;top:225px;width:1px;height:1px;background:#c8c8c8"></div>
<div style="left:129px;top:225px;width:1px;height:1px;background:#909090"></div>
<div style="left:128px;top:228px;width:2px;height:1px;background:#b0b0b0"></div>
<div style="left:127px;top:229px;width:1px;height:1px;background:#c8c8c8"></div>
<div style="left:129px;top:229px;width:1px;height:1px;background:#909090"></div>
<div style="left:128px;top:232px;width:2px;height:1px;background:#b0b0b0"></div>
<div style="left:127px;top:233px;width:1px;height:1px;background:#c8c8c8"></div>
<div style="left:129px;top:233px;width:1px;height:1px;background:#909090"></div>
<div style="left:128px;top:236px;width:2px;height:1px;background:#b0b0b0"></div>
<div style="left:127px;top:237px;width:1px;height:1px;background:#c8c8c8"></div>
<div style="left:129px;top:237px;width:1px;height:1px;background:#909090"></div>
<svg style="left:140px;top:217px" width="17" height="18" viewBox="0 0 17 18">
<path d="M2.6 15.6 L7.2 10.6" stroke="#0c4aa0" stroke-width="3" stroke-linecap="round"/>
<circle cx="10.5" cy="6.2" r="4.4" fill="#f0a010" stroke="#2f5fa0" stroke-width="1.1"/>
<circle cx="9.2" cy="5" r="1.5" fill="#ffd880" opacity="0.8"/>
</svg>
<svg style="left:168px;top:218px" width="15" height="15" viewBox="0 0 15 15">
<defs><radialGradient id="g168218" cx="0.35" cy="0.3" r="0.85"><stop offset="0" stop-color="#ffb870"/><stop offset="1" stop-color="#e8742a"/></radialGradient></defs>
<circle cx="7.5" cy="7.5" r="7" fill="url(#g168218)"/>
<path d="M5.1 5.4 C5.1 2.9 10 2.9 10 5.4 C10 7.2 7.6 7.2 7.6 9.3" stroke="#fff" stroke-width="1.9" fill="none"/>
<rect x="6.6" y="10.6" width="2" height="2" fill="#fff"/>
</svg>
<svg style="left:195px;top:218px" width="15" height="15" viewBox="0 0 15 15">
<defs><radialGradient id="g195218" cx="0.35" cy="0.3" r="0.85"><stop offset="0" stop-color="#6cc3f5"/><stop offset="1" stop-color="#1a7fc9"/></radialGradient></defs>
<circle cx="7.5" cy="7.5" r="7" fill="url(#g195218)"/>
<path d="M5.1 5.4 C5.1 2.9 10 2.9 10 5.4 C10 7.2 7.6 7.2 7.6 9.3" stroke="#fff" stroke-width="1.9" fill="none"/>
<rect x="6.6" y="10.6" width="2" height="2" fill="#fff"/>
</svg>
<div style="left:123px;top:239px;width:1129px;height:29px;background:#ffffff;border-left:1px solid #8c8c8c"></div>
<div style="left:1252px;top:239px;width:23px;height:29px;background:#f0f0f0;border-left:1px solid #e3e3e3"></div>
<div class="t" style="left:129px;top:247px;font-size:12.4px;line-height:16px">Pole</div>
<div class="t" style="left:244px;top:247px;font-size:12.4px;line-height:16px">Binding</div>
<div class="t" style="left:419px;top:247px;font-size:12.4px;line-height:16px">Jméno</div>
<div class="t" style="left:604px;top:247px;font-size:12.4px;line-height:16px">Význam</div>
<div class="t" style="left:829px;top:247px;font-size:12.4px;line-height:16px">Typ</div>
<div class="t" style="left:984px;top:247px;font-size:12.4px;line-height:16px">Hodnota</div>
<div style="left:237px;top:239px;width:2px;height:28px;background:#e3e3e3"></div>
<div style="left:412px;top:239px;width:2px;height:28px;background:#e3e3e3"></div>
<div style="left:597px;top:239px;width:2px;height:28px;background:#e3e3e3"></div>
<div style="left:822px;top:239px;width:2px;height:28px;background:#e3e3e3"></div>
<div style="left:977px;top:239px;width:2px;height:28px;background:#e3e3e3"></div>
<div style="left:1253px;top:268px;width:22px;height:567px;background:#f0f0f0"></div>
<div style="left:1261px;top:450px;width:6px;height:119px;background:#888888"></div>
<div style="left:1274px;top:238px;width:1px;height:597px;background:#8c8c8c"></div>
<div style="left:1284px;top:214px;width:1px;height:621px;background:#70d0f4"></div>
<div style="left:123px;top:268px;width:1130px;height:567px;background:#ffffff;border-left:1px solid #8c8c8c;border-right:1px solid #8c8c8c"></div>
<div style="left:123px;top:284px;width:1130px;height:1px;background:#8c8c8c"></div>
<div class="t" style="left:-63px;width:300px;text-align:right;top:270px;color:#000000">61</div>
<div class="t" style="left:240px;top:270px;color:#000000">razu</div>
<div class="t" style="left:415px;top:270px;color:#000000">lbx_razu</div>
<div class="t" style="left:600px;top:270px;color:#000000">Srážka-přir.</div>
<div class="t" style="left:825px;top:270px;color:#000000">BigDecimal(4,2)</div>
<div class="t" style="left:980px;top:270px;color:#000000">0</div>
<div style="left:123px;top:300px;width:1130px;height:1px;background:#8c8c8c"></div>
<div class="t" style="left:-63px;width:300px;text-align:right;top:286px;color:#000000">62</div>
<div class="t" style="left:240px;top:286px;color:#000000">mwc</div>
<div class="t" style="left:415px;top:286px;color:#000000">lbx_mwc</div>
<div class="t" style="left:600px;top:286px;color:#000000">DPH</div>
<div class="t" style="left:825px;top:286px;color:#000000">Short(4)</div>
<div class="t" style="left:980px;top:286px;color:#000000">0</div>
<div style="left:123px;top:316px;width:1130px;height:1px;background:#8c8c8c"></div>
<div class="t" style="left:-63px;width:300px;text-align:right;top:302px;color:#000000">63</div>
<div class="t" style="left:240px;top:302px;color:#000000">slevyS</div>
<div class="t" style="left:415px;top:302px;color:#000000">lbx_slevy_s</div>
<div class="t" style="left:600px;top:302px;color:#000000">Proc.slev skl.</div>
<div class="t" style="left:825px;top:302px;color:#000000">Short(4)</div>
<div class="t" style="left:980px;top:302px;color:#000000">0</div>
<div style="left:123px;top:332px;width:1130px;height:1px;background:#8c8c8c"></div>
<div class="t" style="left:-63px;width:300px;text-align:right;top:318px;color:#000000">64</div>
<div class="t" style="left:240px;top:318px;color:#000000">adjust</div>
<div class="t" style="left:415px;top:318px;color:#000000">lbx_adjust</div>
<div class="t" style="left:600px;top:318px;color:#000000">Způs. adjust.</div>
<div class="t" style="left:825px;top:318px;color:#000000">String(3)</div>
<div class="t" style="left:980px;top:318px;color:#000000"></div>
<div style="left:123px;top:348px;width:1130px;height:1px;background:#8c8c8c"></div>
<div class="t" style="left:-63px;width:300px;text-align:right;top:334px;color:#000000">65</div>
<div class="t" style="left:240px;top:334px;color:#000000">radnr</div>
<div class="t" style="left:415px;top:334px;color:#000000">lbx_radnr</div>
<div class="t" style="left:600px;top:334px;color:#000000">Řádek dokladu</div>
<div class="t" style="left:825px;top:334px;color:#000000">Short(4)</div>
<div class="t" style="left:980px;top:334px;color:#000000">0</div>
<div style="left:123px;top:364px;width:1130px;height:1px;background:#8c8c8c"></div>
<div class="t" style="left:-63px;width:300px;text-align:right;top:350px;color:#000000">66</div>
<div class="t" style="left:240px;top:350px;color:#000000">uaNahr</div>
<div class="t" style="left:415px;top:350px;color:#000000">lbx_ua_nahr</div>
<div class="t" style="left:600px;top:350px;color:#000000">Náhrada mater.</div>
<div class="t" style="left:825px;top:350px;color:#000000">Short(4)</div>
<div class="t" style="left:980px;top:350px;color:#000000">0</div>
<div style="left:123px;top:380px;width:1130px;height:1px;background:#8c8c8c"></div>
<div class="t" style="left:-63px;width:300px;text-align:right;top:366px;color:#000000">67</div>
<div class="t" style="left:240px;top:366px;color:#000000">kodNahr</div>
<div class="t" style="left:415px;top:366px;color:#000000">lbx_kod_nahr</div>
<div class="t" style="left:600px;top:366px;color:#000000">Kód náhr.mat.</div>
<div class="t" style="left:825px;top:366px;color:#000000">Short(4)</div>
<div class="t" style="left:980px;top:366px;color:#000000">0</div>
<div style="left:123px;top:396px;width:1130px;height:1px;background:#8c8c8c"></div>
<div class="t" style="left:-63px;width:300px;text-align:right;top:382px;color:#000000">68</div>
<div class="t" style="left:240px;top:382px;color:#000000">pbal</div>
<div class="t" style="left:415px;top:382px;color:#000000">lbx_pbal</div>
<div class="t" style="left:600px;top:382px;color:#000000">Počet balení</div>
<div class="t" style="left:825px;top:382px;color:#000000">Short(4)</div>
<div class="t" style="left:980px;top:382px;color:#000000">0</div>
<div style="left:123px;top:412px;width:1130px;height:1px;background:#8c8c8c"></div>
<div class="t" style="left:-63px;width:300px;text-align:right;top:398px;color:#000000">69</div>
<div class="t" style="left:240px;top:398px;color:#000000">bal</div>
<div class="t" style="left:415px;top:398px;color:#000000">lbx_bal</div>
<div class="t" style="left:600px;top:398px;color:#000000">Velikost balení</div>
<div class="t" style="left:825px;top:398px;color:#000000">BigDecimal(8,4)</div>
<div class="t" style="left:980px;top:398px;color:#000000">0</div>
<div style="left:123px;top:428px;width:1130px;height:1px;background:#8c8c8c"></div>
<div class="t" style="left:-63px;width:300px;text-align:right;top:414px;color:#000000">70</div>
<div class="t" style="left:240px;top:414px;color:#000000">kzstat</div>
<div class="t" style="left:415px;top:414px;color:#000000">lbx_kzstat</div>
<div class="t" style="left:600px;top:414px;color:#000000">Do stat.nákupu?</div>
<div class="t" style="left:825px;top:414px;color:#000000">Character(1)</div>
<div class="t" style="left:980px;top:414px;color:#000000"></div>
<div style="left:123px;top:444px;width:1130px;height:1px;background:#8c8c8c"></div>
<div class="t" style="left:-63px;width:300px;text-align:right;top:430px;color:#000000">71</div>
<div class="t" style="left:240px;top:430px;color:#000000">sa</div>
<div class="t" style="left:415px;top:430px;color:#000000">lbx_sa</div>
<div class="t" style="left:600px;top:430px;color:#000000">Druh skl.dokladu</div>
<div class="t" style="left:825px;top:430px;color:#000000">String(2)</div>
<div class="t" style="left:980px;top:430px;color:#000000">P</div>
<div style="left:123px;top:460px;width:1130px;height:1px;background:#8c8c8c"></div>
<div class="t" style="left:-63px;width:300px;text-align:right;top:446px;color:#000000">72</div>
<div class="t" style="left:240px;top:446px;color:#000000">nr</div>
<div class="t" style="left:415px;top:446px;color:#000000">lbx_nr</div>
<div class="t" style="left:600px;top:446px;color:#000000">Číslo dokladu</div>
<div class="t" style="left:825px;top:446px;color:#000000">Integer(9)</div>
<div class="t" style="left:980px;top:446px;color:#000000">6021</div>
<div style="left:123px;top:476px;width:1130px;height:1px;background:#8c8c8c"></div>
<div class="t" style="left:-63px;width:300px;text-align:right;top:462px;color:#000000">73</div>
<div class="t" style="left:240px;top:462px;color:#000000">pos</div>
<div class="t" style="left:415px;top:462px;color:#000000">lbx_pos</div>
<div class="t" style="left:600px;top:462px;color:#000000">Číslo řádku dokladu</div>
<div class="t" style="left:825px;top:462px;color:#000000">Integer(9)</div>
<div class="t" style="left:980px;top:462px;color:#000000">1</div>
<div style="left:123px;top:492px;width:1130px;height:1px;background:#8c8c8c"></div>
<div class="t" style="left:-63px;width:300px;text-align:right;top:478px;color:#000000">74</div>
<div class="t" style="left:240px;top:478px;color:#000000">lbaLauf</div>
<div class="t" style="left:415px;top:478px;color:#000000">lbx_lba_lauf</div>
<div class="t" style="left:600px;top:478px;color:#000000">Id.záznamu LBA</div>
<div class="t" style="left:825px;top:478px;color:#000000">Integer(9)</div>
<div class="t" style="left:980px;top:478px;color:#000000">66750521</div>
<div style="left:123px;top:508px;width:1130px;height:1px;background:#8c8c8c"></div>
<div class="t" style="left:-63px;width:300px;text-align:right;top:494px;color:#000000">75</div>
<div class="t" style="left:240px;top:494px;color:#000000">art</div>
<div class="t" style="left:415px;top:494px;color:#000000">lbx_art</div>
<div class="t" style="left:600px;top:494px;color:#000000">Typ dokladu</div>
<div class="t" style="left:825px;top:494px;color:#000000">String(2)</div>
<div class="t" style="left:980px;top:494px;color:#000000">PX</div>
<div style="left:123px;top:524px;width:1130px;height:1px;background:#8c8c8c"></div>
<div class="t" style="left:-63px;width:300px;text-align:right;top:510px;color:#000000">76</div>
<div class="t" style="left:240px;top:510px;color:#000000">lbaBa</div>
<div class="t" style="left:415px;top:510px;color:#000000">lbx_lba_ba</div>
<div class="t" style="left:600px;top:510px;color:#000000">Číslo pohybu</div>
<div class="t" style="left:825px;top:510px;color:#000000">String(2)</div>
<div class="t" style="left:980px;top:510px;color:#000000"></div>
<div style="left:123px;top:540px;width:1130px;height:1px;background:#8c8c8c"></div>
<div class="t" style="left:-63px;width:300px;text-align:right;top:526px;color:#000000">77</div>
<div class="t" style="left:240px;top:526px;color:#000000">dkvNr</div>
<div class="t" style="left:415px;top:526px;color:#000000">lbx_dkv_nr</div>
<div class="t" style="left:600px;top:526px;color:#000000">Číslo dodacího místa</div>
<div class="t" style="left:825px;top:526px;color:#000000">Long(16)</div>
<div class="t" style="left:980px;top:526px;color:#000000">0</div>
<div style="left:123px;top:556px;width:1130px;height:1px;background:#8c8c8c"></div>
<div class="t" style="left:-63px;width:300px;text-align:right;top:542px;color:#000000">78</div>
<div class="t" style="left:240px;top:542px;color:#000000">vydPrij</div>
<div class="t" style="left:415px;top:542px;color:#000000">lbx_vyd_prij</div>
<div class="t" style="left:600px;top:542px;color:#000000">Ozn.příjmu/výdeje</div>
<div class="t" style="left:825px;top:542px;color:#000000">Character(1)</div>
<div class="t" style="left:980px;top:542px;color:#000000"></div>
<div style="left:123px;top:572px;width:1130px;height:1px;background:#8c8c8c"></div>
<div class="t" style="left:-63px;width:300px;text-align:right;top:558px;color:#000000">79</div>
<div class="t" style="left:240px;top:558px;color:#000000">pnb</div>
<div class="t" style="left:415px;top:558px;color:#000000">lbx_pnb</div>
<div class="t" style="left:600px;top:558px;color:#000000">Cena/jedn.B/N</div>
<div class="t" style="left:825px;top:558px;color:#000000">Character(1)</div>
<div class="t" style="left:980px;top:558px;color:#000000"></div>
<div style="left:123px;top:588px;width:1130px;height:1px;background:#8c8c8c"></div>
<div class="t" style="left:-63px;width:300px;text-align:right;top:574px;color:#000000">80</div>
<div class="t" style="left:240px;top:574px;color:#000000">mSklad</div>
<div class="t" style="left:415px;top:574px;color:#000000">lbx_m_sklad</div>
<div class="t" style="left:600px;top:574px;color:#000000">Metoda skladování</div>
<div class="t" style="left:825px;top:574px;color:#000000">Character(1)</div>
<div class="t" style="left:980px;top:574px;color:#000000"></div>
<div style="left:123px;top:604px;width:1130px;height:1px;background:#8c8c8c"></div>
<div class="t" style="left:-63px;width:300px;text-align:right;top:590px;color:#000000">81</div>
<div class="t" style="left:240px;top:590px;color:#000000">mAlokace</div>
<div class="t" style="left:415px;top:590px;color:#000000">lbx_m_alokace</div>
<div class="t" style="left:600px;top:590px;color:#000000">Metoda alokace</div>
<div class="t" style="left:825px;top:590px;color:#000000">Character(1)</div>
<div class="t" style="left:980px;top:590px;color:#000000"></div>
<div style="left:123px;top:620px;width:1130px;height:1px;background:#8c8c8c"></div>
<div class="t" style="left:-63px;width:300px;text-align:right;top:606px;color:#000000">82</div>
<div class="t" style="left:240px;top:606px;color:#000000">uctZak</div>
<div class="t" style="left:415px;top:606px;color:#000000">lbx_uct_zak</div>
<div class="t" style="left:600px;top:606px;color:#000000">Číslo účetní zakázky</div>
<div class="t" style="left:825px;top:606px;color:#000000">String(20)</div>
<div class="t" style="left:980px;top:606px;color:#000000"></div>
<div style="left:123px;top:636px;width:1130px;height:1px;background:#8c8c8c"></div>
<div class="t" style="left:-63px;width:300px;text-align:right;top:622px;color:#000000">83</div>
<div class="t" style="left:240px;top:622px;color:#000000">lpeP</div>
<div class="t" style="left:415px;top:622px;color:#000000">lbx_lpe_p</div>
<div class="t" style="left:600px;top:622px;color:#000000">Představitel sklad.&nbsp; místa</div>
<div class="t" style="left:825px;top:622px;color:#000000">String(18)</div>
<div class="t" style="left:980px;top:622px;color:#000000"></div>
<div style="left:124px;top:637px;width:1128px;height:15px;background:#0078d7"></div>
<div style="left:123px;top:652px;width:1130px;height:1px;background:#8c8c8c"></div>
<div class="t" style="left:-63px;width:300px;text-align:right;top:638px;color:#ffffff">84</div>
<div class="t" style="left:240px;top:638px;color:#ffffff">text3</div>
<div class="t" style="left:415px;top:638px;color:#ffffff">lbx_text3</div>
<div class="t" style="left:600px;top:638px;color:#ffffff">Text3</div>
<div class="t" style="left:825px;top:638px;color:#ffffff">String(20)</div>
<div class="t" style="left:980px;top:638px;color:#ffffff">makro pred zapisem</div>
<div style="left:599px;top:637px;width:224px;height:15px;border:1px dotted #f89830"></div>
<div style="left:123px;top:668px;width:1130px;height:1px;background:#8c8c8c"></div>
<div class="t" style="left:-63px;width:300px;text-align:right;top:654px;color:#000000">85</div>
<div class="t" style="left:240px;top:654px;color:#000000">text4</div>
<div class="t" style="left:415px;top:654px;color:#000000">lbx_text4</div>
<div class="t" style="left:600px;top:654px;color:#000000">Text-4</div>
<div class="t" style="left:825px;top:654px;color:#000000">String(20)</div>
<div class="t" style="left:980px;top:654px;color:#000000"></div>
<div style="left:123px;top:684px;width:1130px;height:1px;background:#8c8c8c"></div>
<div class="t" style="left:-63px;width:300px;text-align:right;top:670px;color:#000000">86</div>
<div class="t" style="left:240px;top:670px;color:#000000">stornoJn</div>
<div class="t" style="left:415px;top:670px;color:#000000">lbx_storno_jn</div>
<div class="t" style="left:600px;top:670px;color:#000000">Příznak storna</div>
<div class="t" style="left:825px;top:670px;color:#000000">Character(1)</div>
<div class="t" style="left:980px;top:670px;color:#000000"></div>
<div style="left:123px;top:700px;width:1130px;height:1px;background:#8c8c8c"></div>
<div class="t" style="left:-63px;width:300px;text-align:right;top:686px;color:#000000">87</div>
<div class="t" style="left:240px;top:686px;color:#000000">zauctJn</div>
<div class="t" style="left:415px;top:686px;color:#000000">lbx_zauct_jn</div>
<div class="t" style="left:600px;top:686px;color:#000000">Příznak zaúčtování</div>
<div class="t" style="left:825px;top:686px;color:#000000">Character(1)</div>
<div class="t" style="left:980px;top:686px;color:#000000"></div>
<div style="left:123px;top:716px;width:1130px;height:1px;background:#8c8c8c"></div>
<div class="t" style="left:-63px;width:300px;text-align:right;top:702px;color:#000000">88</div>
<div class="t" style="left:240px;top:702px;color:#000000">sPohybJn</div>
<div class="t" style="left:415px;top:702px;color:#000000">lbx_s_pohyb_jn</div>
<div class="t" style="left:600px;top:702px;color:#000000">Souvztažný převodní pohyb</div>
<div class="t" style="left:825px;top:702px;color:#000000">Character(1)</div>
<div class="t" style="left:980px;top:702px;color:#000000"></div>
<div style="left:123px;top:732px;width:1130px;height:1px;background:#8c8c8c"></div>
<div class="t" style="left:-63px;width:300px;text-align:right;top:718px;color:#000000">89</div>
<div class="t" style="left:240px;top:718px;color:#000000">umrfakt</div>
<div class="t" style="left:415px;top:718px;color:#000000">lbx_umrfakt</div>
<div class="t" style="left:600px;top:718px;color:#000000">Koeficient</div>
<div class="t" style="left:825px;top:718px;color:#000000">BigDecimal(10,4)</div>
<div class="t" style="left:980px;top:718px;color:#000000">0</div>
<div style="left:123px;top:748px;width:1130px;height:1px;background:#8c8c8c"></div>
<div class="t" style="left:-63px;width:300px;text-align:right;top:734px;color:#000000">90</div>
<div class="t" style="left:240px;top:734px;color:#000000">vadyVe</div>
<div class="t" style="left:415px;top:734px;color:#000000">lbx_vady_ve</div>
<div class="t" style="left:600px;top:734px;color:#000000">Počet velkých vad</div>
<div class="t" style="left:825px;top:734px;color:#000000">Integer(9)</div>
<div class="t" style="left:980px;top:734px;color:#000000">0</div>
<div style="left:123px;top:764px;width:1130px;height:1px;background:#8c8c8c"></div>
<div class="t" style="left:-63px;width:300px;text-align:right;top:750px;color:#000000">91</div>
<div class="t" style="left:240px;top:750px;color:#000000">gewNetto1</div>
<div class="t" style="left:415px;top:750px;color:#000000">lbx_gew_netto1</div>
<div class="t" style="left:600px;top:750px;color:#000000">Hmotnost netto</div>
<div class="t" style="left:825px;top:750px;color:#000000">BigDecimal(10,4)</div>
<div class="t" style="left:980px;top:750px;color:#000000">0</div>
<div style="left:123px;top:780px;width:1130px;height:1px;background:#8c8c8c"></div>
<div class="t" style="left:-63px;width:300px;text-align:right;top:766px;color:#000000">92</div>
<div class="t" style="left:240px;top:766px;color:#000000">procVlh</div>
<div class="t" style="left:415px;top:766px;color:#000000">lbx_proc_vlh</div>
<div class="t" style="left:600px;top:766px;color:#000000">Procento vlhkosti</div>
<div class="t" style="left:825px;top:766px;color:#000000">BigDecimal(4,2)</div>
<div class="t" style="left:980px;top:766px;color:#000000">0</div>
<div style="left:123px;top:796px;width:1130px;height:1px;background:#8c8c8c"></div>
<div class="t" style="left:-63px;width:300px;text-align:right;top:782px;color:#000000">93</div>
<div class="t" style="left:240px;top:782px;color:#000000">gewBtto1</div>
<div class="t" style="left:415px;top:782px;color:#000000">lbx_gew_btto1</div>
<div class="t" style="left:600px;top:782px;color:#000000">Hmotnost brutto</div>
<div class="t" style="left:825px;top:782px;color:#000000">BigDecimal(10,4)</div>
<div class="t" style="left:980px;top:782px;color:#000000">0</div>
<div style="left:123px;top:812px;width:1130px;height:1px;background:#8c8c8c"></div>
<div class="t" style="left:-63px;width:300px;text-align:right;top:798px;color:#000000">94</div>
<div class="t" style="left:240px;top:798px;color:#000000">gewBttoc</div>
<div class="t" style="left:415px;top:798px;color:#000000">lbx_gew_bttoc</div>
<div class="t" style="left:600px;top:798px;color:#000000">Hmostnost skladová</div>
<div class="t" style="left:825px;top:798px;color:#000000">BigDecimal(10,4)</div>
<div class="t" style="left:980px;top:798px;color:#000000">0</div>
<div style="left:123px;top:828px;width:1130px;height:1px;background:#8c8c8c"></div>
<div class="t" style="left:-63px;width:300px;text-align:right;top:814px;color:#000000">95</div>
<div class="t" style="left:240px;top:814px;color:#000000">ename</div>
<div class="t" style="left:415px;top:814px;color:#000000">lbx_ename</div>
<div class="t" style="left:600px;top:814px;color:#000000">Autor založení</div>
<div class="t" style="left:825px;top:814px;color:#000000">String(8)</div>
<div class="t" style="left:980px;top:814px;color:#000000">slavik</div>
<div style="left:123px;top:844px;width:1130px;height:1px;background:#8c8c8c"></div>
<div class="t" style="left:-63px;width:300px;text-align:right;top:830px;color:#000000">96</div>
<div class="t" style="left:240px;top:830px;color:#000000">edat</div>
<div class="t" style="left:415px;top:830px;color:#000000">lbx_edat</div>
<div class="t" style="left:600px;top:830px;color:#000000">Datum založení</div>
<div class="t" style="left:825px;top:830px;color:#000000">Integer(9)</div>
<div class="t" style="left:980px;top:830px;color:#000000">20221208</div>
<div style="left:238px;top:268px;width:1px;height:567px;background:#8c8c8c"></div>
<div style="left:413px;top:268px;width:1px;height:567px;background:#8c8c8c"></div>
<div style="left:598px;top:268px;width:1px;height:567px;background:#8c8c8c"></div>
<div style="left:823px;top:268px;width:1px;height:567px;background:#8c8c8c"></div>
<div style="left:978px;top:268px;width:1px;height:567px;background:#8c8c8c"></div>
<div style="left:123px;top:268px;width:1130px;height:1px;background:#8c8c8c"></div>
</body></html>
